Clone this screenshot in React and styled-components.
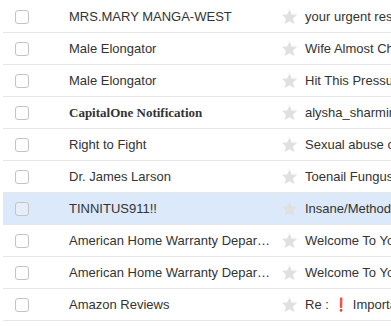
import styled, { createGlobalStyle } from "styled-components"

const GlobalStyle = createGlobalStyle`
  html, body {
    margin: 0;
    padding: 0;
    background: #fff;
    overflow: hidden;
  }
  body {
    font-family: "Liberation Sans", Arial, sans-serif;
  }
`

const List = styled.ul`
  list-style: none;
  margin: 1px 0 0 3px;
  padding: 0;
  width: 600px;
`

const Row = styled.li`
  box-sizing: border-box;
  height: 32px;
  display: flex;
  align-items: center;
  border-bottom: 1px solid #e6e6e6;
  background: ${(p) => (p.$selected ? "#dbe9fa" : "#fff")};
  color: #333;
  font-size: 13px;
`

const CheckCell = styled.div`
  width: 66px;
  display: flex;
  align-items: center;
  padding-left: 12px;
  box-sizing: border-box;
`

const Checkbox = styled.span`
  box-sizing: border-box;
  width: 14px;
  height: 14px;
  border: 1px solid #c4c4c4;
  border-radius: 3px;
  background: ${(p) => (p.$selected ? "#e6eefa" : "#fff")};
`

const Sender = styled.div`
  width: 204px;
  white-space: nowrap;
  overflow: hidden;
  text-overflow: ellipsis;
  font-family: ${(p) =>
    p.$serif ? '"Liberation Serif", "Times New Roman", serif' : '"Liberation Sans", Arial, sans-serif'};
  font-weight: ${(p) => (p.$serif ? 700 : 400)};
`

const StarCell = styled.div`
  width: 32px;
  display: flex;
  justify-content: center;
  align-items: center;
`

const Subject = styled.div`
  white-space: nowrap;
`

const Alert = styled.span`
  color: #dd1f26;
  font-family: "DejaVu Sans", sans-serif;
  font-weight: 700;
  margin: 0 4px;
`

const Star = () => (
  <svg width="17" height="17" viewBox="0 0 24 24">
    <path
      d="M12 1.8l3.1 7.2 7.8.7-5.9 5.2 1.8 7.7L12 18.6l-6.8 4 1.8-7.7L1.1 9.7l7.8-.7z"
      fill="#e0e0e0"
    />
  </svg>
)

const mails = [
  { sender: "MRS.MARY MANGA-WEST", subject: "your urgent response is needed" },
  { sender: "Male Elongator", subject: "Wife Almost Cheated On Me" },
  { sender: "Male Elongator", subject: "Hit This Pressure Point" },
  { sender: "CapitalOne Notification", subject: "alysha_sharmin@yahoo.com", serif: true },
  { sender: "Right to Fight", subject: "Sexual abuse charges" },
  { sender: "Dr. James Larson", subject: "Toenail Fungus Cure" },
  { sender: "TINNITUS911!!", subject: "Insane/Method to stop ringing", selected: true },
  { sender: "American Home Warranty Department", subject: "Welcome To Your Home Warranty" },
  { sender: "American Home Warranty Department", subject: "Welcome To Your Home Warranty" },
  { sender: "Amazon Reviews", subject: "Important", alert: true },
]

const App = () => {
  return (
    <>
      <GlobalStyle />
      <List>
        {mails.map((m, i) => (
          <Row key={i} $selected={m.selected}>
            <CheckCell>
              <Checkbox $selected={m.selected} />
            </CheckCell>
            <Sender $serif={m.serif}>{m.sender}</Sender>
            <StarCell>
              <Star />
            </StarCell>
            <Subject>
              {m.alert ? (
                <>
                  Re :<Alert>❗</Alert>
                  {m.subject}
                </>
              ) : (
                m.subject
              )}
            </Subject>
          </Row>
        ))}
      </List>
    </>
  )
}

export default App
